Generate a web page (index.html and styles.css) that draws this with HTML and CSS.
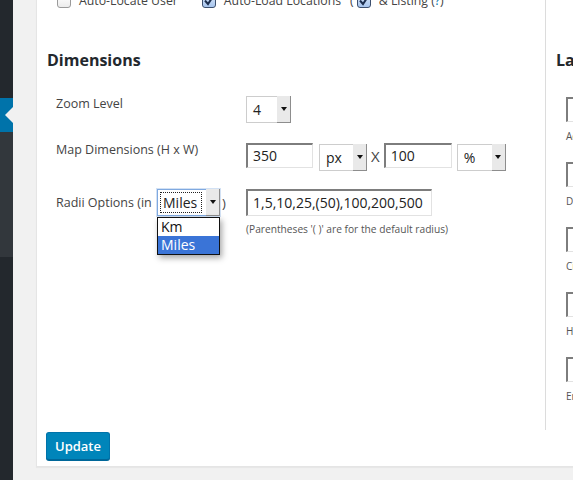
FILE: index.html
```html
<!DOCTYPE html>
<html>
<head>
<meta charset="utf-8">
<link rel="stylesheet" href="styles.css">
</head>
<body>
<div class="page">
  <aside class="sidebar">
    <div class="sb-top"></div>
    <div class="sb-current"><span class="sb-arrow"></span></div>
    <div class="sb-sub"></div>
  </aside>
  <main class="main">
    <div class="panel">
      <div class="cols">
        <section class="col-left">
          <div class="checks">
            <span class="cb"></span><span class="cb-label cb-l1">Auto-Locate User</span>
            <span class="cb cb-on"><svg viewBox="0 0 14 14" width="14" height="14"><path d="M3 6.5 L6 10 L11 2.5" fill="none" stroke="#1d2f4f" stroke-width="2"/></svg></span><span class="cb-label cb-l2">Auto-Load Locations</span>
            <span class="paren">(</span><span class="cb cb-on"><svg viewBox="0 0 14 14" width="14" height="14"><path d="M3 6.5 L6 10 L11 2.5" fill="none" stroke="#1d2f4f" stroke-width="2"/></svg></span><span class="cb-label">&amp; Listing (<a class="help">?</a>)</span>
          </div>
          <h2 class="title">Dimensions</h2>
          <div class="row row-zoom">
            <div class="label">Zoom Level</div>
            <div class="controls">
              <span class="sel sel-zoom"><span class="sel-text">4</span><span class="sel-btn"><i class="tri"></i></span></span>
            </div>
          </div>
          <div class="row row-dim">
            <div class="label">Map Dimensions (H x W)</div>
            <div class="controls">
              <span class="inp inp-h">350</span>
              <span class="sel sel-px"><span class="sel-text">px</span><span class="sel-btn"><i class="tri"></i></span></span>
              <span class="times">X</span>
              <span class="inp inp-w">100</span>
              <span class="sel sel-pct"><span class="sel-text">%</span><span class="sel-btn"><i class="tri"></i></span></span>
            </div>
          </div>
          <div class="row row-radii">
            <div class="label label-radii">
              <span class="radii-text">Radii Options (in</span>
              <span class="sel sel-miles">
                <span class="sel-text"><span class="focus">Miles</span></span><span class="sel-btn"><i class="tri"></i></span>
                <span class="dropdown">
                  <span class="opt">Km</span>
                  <span class="opt opt-on">Miles</span>
                </span>
              </span>
              <span class="close">)</span>
            </div>
            <div class="controls controls-col">
              <span class="inp inp-radii">1,5,10,25,(50),100,200,500</span>
              <span class="hint">(Parentheses '( )' are for the default radius)</span>
            </div>
          </div>
        </section>
        <section class="col-right">
          <h2 class="title">Labels</h2>
          <div class="lbl-item"><span class="box"></span><span class="small">Address</span></div>
          <div class="lbl-item"><span class="box"></span><span class="small">Directions</span></div>
          <div class="lbl-item"><span class="box"></span><span class="small">City</span></div>
          <div class="lbl-item"><span class="box"></span><span class="small">Hours</span></div>
          <div class="lbl-item"><span class="box"></span><span class="small">Email</span></div>
        </section>
      </div>
      <div class="footer">
        <button class="btn">Update</button>
      </div>
    </div>
  </main>
</div>
</body>
</html>
```
FILE: styles.css
```css
html, body {
  margin: 0;
  padding: 0;
  height: 100%;
  overflow: hidden;
}
body {
  background: #f1f1f1;
  font-family: "Open Sans", "Noto Sans", sans-serif;
  color: #444;
}
.page {
  display: flex;
  height: 480px;
}
.sidebar {
  width: 13px;
  flex: none;
  display: flex;
  flex-direction: column;
  background: #23282d;
}
.sb-top { height: 98px; }
.sb-current {
  height: 34px;
  background: #0073aa;
  display: flex;
  justify-content: flex-end;
  align-items: center;
}
.sb-arrow {
  width: 0;
  height: 0;
  border-top: 8px solid transparent;
  border-bottom: 8px solid transparent;
  border-right: 8px solid #f1f1f1;
}
.sb-sub {
  height: 125px;
  background: #32373c;
}
.main {
  flex: 1;
  padding-left: 23px;
  min-width: 0;
}
.panel {
  margin-top: -14px;
  background: #fff;
  border: 1px solid #e5e5e5;
  border-right: none;
  box-shadow: 0 1px 1px rgba(0,0,0,.04);
  width: 700px;
}
.cols {
  display: flex;
  height: 443px;
}
.col-left {
  width: 498px;
  flex: none;
  padding: 5px 0 0 10px;
}
.col-right {
  flex: 1;
  border-left: 1px solid #dcdcdc;
  padding: 63px 0 0 10px;
}
.checks {
  display: flex;
  align-items: center;
  height: 16px;
  padding-left: 10px;
  font-size: 12.3px;
  color: #444;
  white-space: nowrap;
}
.cb {
  width: 14px;
  height: 14px;
  box-sizing: border-box;
  border: 1px solid #9a9a9a;
  border-radius: 3px;
  background: linear-gradient(#ffffff, #ececec);
  margin-right: 8px;
  display: inline-block;
  margin-top: 2px;
  flex: none;
}
.cb-on {
  border-color: #3c4f6e;
  background: linear-gradient(#dbe8f9, #a7c5ee);
}
.cb-on svg { display: block; margin: -1px 0 0 -1px; }
.cb-l1 { margin-right: 24px; }
.cb-l2 { margin-right: 9px; }
.paren { margin-right: 3px; }
.help { color: #0073aa; }
.title {
  margin: 42px 0 0;
  font-size: 16px;
  line-height: 20px;
  font-weight: 700;
  color: #23282d;
  white-space: nowrap;
}
.col-right .title { margin-top: 0; }
.row {
  display: flex;
  padding-left: 9px;
}
.row-zoom { margin-top: 26px; height: 46px; }
.row-dim { height: 47px; }
.label {
  width: 190px;
  flex: none;
  font-size: 12.5px;
  line-height: 18px;
  margin-top: -1px;
  color: #444;
  white-space: nowrap;
}
.controls {
  display: flex;
  align-items: flex-start;
}
.controls-col {
  flex-direction: column;
}
.label-radii {
  display: flex;
  align-items: center;
  margin-top: 0;
  height: 27px;
}
.radii-text { width: 101px; flex: none; }
.close { margin-left: 2px; font-size: 13px; }
.sel {
  position: relative;
  display: inline-flex;
  box-sizing: border-box;
  height: 27px;
  border: 1px solid #cdcdcd;
  background: #fff;
  flex: none;
}
.sel-zoom { width: 45px; }
.sel-px { width: 48px; margin: 2px 0 0 6px; }
.sel-pct { width: 49px; margin: 2px 0 0 5px; }
.sel-miles {
  width: 63px;
  border-color: #7fa9e0;
  box-shadow: 0 0 0 1px rgba(127,169,224,.35);
}
.sel-text {
  flex: 1;
  padding-left: 6px;
  font-size: 14px;
  line-height: 25px;
  color: #222;
}
.sel-miles .sel-text { padding-left: 2px; display: flex; align-items: center; }
.focus {
  display: block;
  border: 1px dotted #222;
  width: 42px;
  height: 21px;
  box-sizing: border-box;
  line-height: 19px;
  padding-left: 2px;
  font-size: 14px;
}
.sel-btn {
  width: 14px;
  box-sizing: border-box;
  background: #e9e9e9;
  border-right: 1px solid #8d8d8d;
  border-bottom: 1px solid #8d8d8d;
  display: flex;
  align-items: center;
  justify-content: center;
  margin: -1px -1px -1px 0;
}
.tri {
  width: 0;
  height: 0;
  border-left: 3px solid transparent;
  border-right: 3px solid transparent;
  border-top: 4px solid #111;
}
.dropdown {
  position: absolute;
  left: -1px;
  top: 27px;
  width: 63px;
  box-sizing: border-box;
  border: 1px solid #111;
  background: #fff;
  box-shadow: 2px 3px 6px rgba(0,0,0,.35);
  display: flex;
  flex-direction: column;
}
.opt {
  height: 18px;
  line-height: 18px;
  padding-left: 3px;
  font-size: 14px;
  color: #111;
}
.opt-on {
  background: #3a74d7;
  color: #fff;
}
.inp {
  box-sizing: border-box;
  border-style: solid;
  border-width: 2px 1px 1px 2px;
  border-color: #7d7d7d #e2e2e2 #e2e2e2 #7d7d7d;
  padding-left: 5px;
  font-size: 14px;
  color: #222;
  background: #fff;
  display: inline-block;
  flex: none;
}
.inp-h, .inp-w {
  height: 25px;
  line-height: 21px;
  margin-top: 1px;
}
.inp-h { width: 67px; }
.inp-w { width: 68px; }
.inp-radii {
  width: 186px;
  height: 27px;
  line-height: 23px;
}
.times {
  font-size: 15px;
  line-height: 25px;
  margin: 2px 4px 0 4px;
  color: #444;
}
.hint {
  margin-top: 7px;
  font-size: 10.2px;
  line-height: 12px;
  color: #555;
  white-space: nowrap;
}
.lbl-item {
  display: flex;
  flex-direction: column;
  padding-left: 10px;
}
.lbl-item:first-of-type { margin-top: 27px; }
.box {
  width: 200px;
  height: 25px;
  box-sizing: border-box;
  border-style: solid;
  border-width: 2px 1px 1px 2px;
  border-color: #7d7d7d #e2e2e2 #e2e2e2 #7d7d7d;
}
.small {
  margin-top: 8px;
  margin-bottom: 20px;
  font-size: 10px;
  line-height: 12px;
  color: #555;
}
.footer {
  padding: 2px 9px 6px;
}
.btn {
  display: block;
  height: 28px;
  width: 64px;
  padding: 0;
  background: #0085ba;
  border: 1px solid #0073aa;
  border-bottom-color: #006799;
  border-radius: 3px;
  box-shadow: 0 1px 0 #006799;
  color: #fff;
  font-family: "Open Sans", "Noto Sans", sans-serif;
  font-size: 13px;
  font-weight: 600;
}
```
